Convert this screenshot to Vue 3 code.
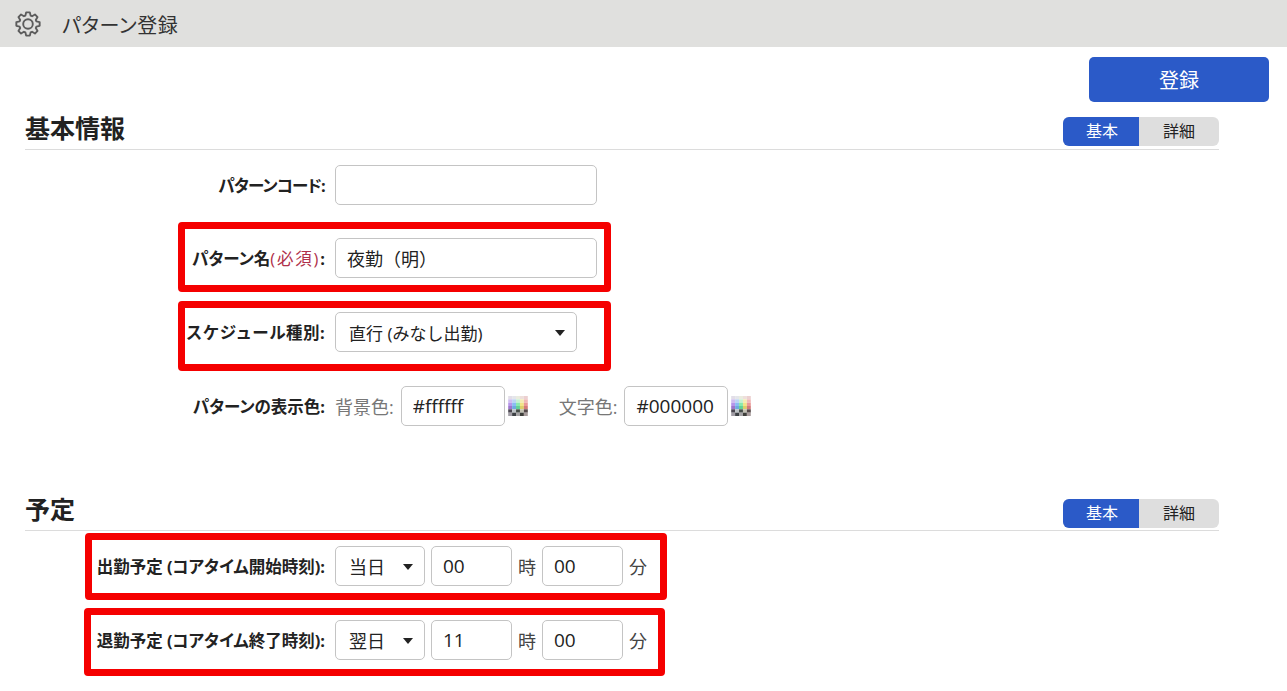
<script setup>
const gearPath = (() => {
  const teeth = 8, cx = 13, cy = 13, ro = 11.8, ri = 8.8
  const pts = []
  for (let i = 0; i < teeth; i++) {
    const a = (i / teeth) * Math.PI * 2 - Math.PI / 2
    const s = (Math.PI * 2) / teeth
    const list = [[ri, -0.5 * s + 0.09], [ro, -0.2 * s], [ro, 0.2 * s], [ri, 0.5 * s - 0.09]]
    list.forEach(([r, d]) => pts.push([cx + r * Math.cos(a + d), cy + r * Math.sin(a + d)]))
  }
  return 'M' + pts.map(p => p[0].toFixed(2) + ' ' + p[1].toFixed(2)).join('L') + 'Z'
})()

const paletteRows = [
  ['#e2dee8', '#e4e6ea', '#eaecdf', '#eedfdb', '#ecd0d0'],
  ['#cfbcf0', '#bcd3f4', '#c6f0d2', '#f4ecb4', '#f0b8b8'],
  ['#b696ea', '#8abcf2', '#88eaae', '#f2e488', '#ea9898'],
  ['#9e76cc', '#6eaae0', '#62d296', '#dccf6a', '#d47a7a'],
  ['#4a4650', '#bcc2c6', '#444c48', '#c2c0b2', '#544848'],
  ['#a09ca4', '#3c4044', '#a4a2a4', '#3e3e3a', '#a89c9c']
]
const cells = paletteRows.flatMap((row, y) => row.map((fill, x) => ({ x: x * 4, y: y * 3.4, fill })))

const annotations = [
  { left: 178, top: 222, width: 433, height: 70 },
  { left: 178, top: 301, width: 433, height: 70 },
  { left: 85, top: 533, width: 582, height: 67 },
  { left: 84, top: 608, width: 581, height: 68 }
]
</script>

<template>
  <div class="page">
    <header class="titlebar">
      <svg class="gear" width="26" height="26" viewBox="0 0 26 26" fill="none" stroke="#5c5c5c" stroke-width="1.9" stroke-linejoin="round">
        <path :d="gearPath" />
        <circle cx="13" cy="13" r="4.8" />
      </svg>
      <h1 class="title">パターン登録</h1>
    </header>

    <div class="toolbar">
      <button class="primary" type="button">登録</button>
    </div>

    <section class="section">
      <div class="section-head raised">
        <h2>基本情報</h2>
        <div class="segment"><span class="on">基本</span><span>詳細</span></div>
      </div>
      <div class="rows">
        <div class="row first">
          <label class="lab tight">パターンコード:</label>
          <input class="inp wide" value="" />
        </div>
        <div class="row">
          <label class="lab">パターン名<span class="req">(必須)</span>:</label>
          <input class="inp wide jp" value="夜勤（明）" />
        </div>
        <div class="row">
          <label class="lab full">スケジュール種別:</label>
          <div class="sel type">直行 (みなし出勤)</div>
        </div>
        <div class="row">
          <label class="lab">パターンの表示色:</label>
          <span class="sub">背景色:</span>
          <input class="inp color num" value="#ffffff" />
          <svg class="palette" width="20" height="20" viewBox="0 0 20 20.4"><rect v-for="c in cells" :key="c.x + '-' + c.y" :x="c.x" :y="c.y" width="4" height="3.4" :fill="c.fill" /></svg>
          <span class="sub second">文字色:</span>
          <input class="inp color num" value="#000000" />
          <svg class="palette" width="20" height="20" viewBox="0 0 20 20.4"><rect v-for="c in cells" :key="c.x + '-' + c.y" :x="c.x" :y="c.y" width="4" height="3.4" :fill="c.fill" /></svg>
        </div>
      </div>
    </section>

    <section class="section plan">
      <div class="section-head">
        <h2>予定</h2>
        <div class="segment"><span class="on">基本</span><span>詳細</span></div>
      </div>
      <div class="rows">
        <div class="row">
          <label class="lab">出勤予定 (コアタイム開始時刻):</label>
          <div class="sel day">当日</div>
          <input class="inp time num" value="00" />
          <span class="unit">時</span>
          <input class="inp time num" value="00" />
          <span class="unit">分</span>
        </div>
        <div class="row">
          <label class="lab">退勤予定 (コアタイム終了時刻):</label>
          <div class="sel day">翌日</div>
          <input class="inp time num" value="11" />
          <span class="unit">時</span>
          <input class="inp time num" value="00" />
          <span class="unit">分</span>
        </div>
      </div>
    </section>

    <div
      v-for="(a, i) in annotations"
      :key="i"
      class="mark"
      :style="{ left: a.left + 'px', top: a.top + 'px', width: a.width + 'px', height: a.height + 'px' }"
    ></div>
  </div>
</template>

<style>
html, body { margin: 0; background: #fff; overflow: hidden; }
</style>

<style scoped>
.page {
  position: relative;
  width: 1287px;
  height: 691px;
  overflow: hidden;
  font-family: "Open Sans", "Noto Sans CJK JP", sans-serif;
  font-size: 16px;
  color: #222;
  background: #fff;
}
.titlebar {
  display: flex;
  align-items: center;
  height: 47px;
  padding-left: 15px;
  box-sizing: border-box;
  background: #e0e0de;
}
.gear { flex: none; }
.title {
  margin: 2px 0 0 21px;
  font-size: 20px;
  font-weight: 400;
  color: #333;
  font-feature-settings: "palt";
  letter-spacing: 0.6px;
}
.toolbar {
  display: flex;
  justify-content: flex-end;
  height: 55px;
  padding: 10px 18px 0 0;
  box-sizing: border-box;
}
.primary {
  width: 180px;
  height: 45px;
  border: 0;
  border-radius: 5px;
  background: #2b5ac8;
  color: #fff;
  font: inherit;
  font-size: 20px;
}
.section {
  width: 1194px;
  margin-left: 25px;
}
.plan { margin-top: 57px; }
.section-head {
  display: flex;
  justify-content: space-between;
  align-items: flex-end;
  height: 48px;
  padding-bottom: 2px;
  box-sizing: border-box;
  border-bottom: 1px solid #dcdcdc;
}
.raised { padding-bottom: 3px; }
.section-head h2 {
  margin: 0 0 3px;
  font-size: 25px;
  line-height: 32px;
  font-weight: 700;
  color: #222;
}
.raised h2 { margin-bottom: 2px; }
.segment {
  display: flex;
  width: 156px;
  height: 29px;
  border-radius: 6px;
  overflow: hidden;
  background: #dedede;
  font-size: 16px;
  line-height: 29px;
  text-align: center;
}
.segment span { flex: 1; }
.segment .on {
  flex: none;
  width: 76px;
  padding-left: 2px;
  box-sizing: border-box;
  background: #2b5ac8;
  color: #fff;
}
.rows {
  display: flex;
  flex-direction: column;
  gap: 34px;
  padding-top: 15px;
}
.row {
  display: flex;
  align-items: center;
  height: 40px;
}
.first { margin-bottom: -1px; }
.lab {
  flex: none;
  width: 300px;
  margin-right: 10px;
  margin-top: -1px;
  text-align: right;
  font-weight: 700;
  font-size: 16.5px;
  font-feature-settings: "palt";
  color: #222;
}
.tight { letter-spacing: -0.8px; }
.full {
  font-feature-settings: normal;
  letter-spacing: 0.4px;
}
.req {
  font-weight: 400;
  color: #b0304a;
  letter-spacing: 1.8px;
}
.inp, .sel {
  box-sizing: border-box;
  height: 40px;
  border: 1px solid #c4c4c4;
  border-radius: 5px;
  background: #fff;
  font: inherit;
  font-size: 17px;
  color: #222;
  padding: 0 11px;
  outline: none;
}
.jp { font-size: 18px; }
.num { font-size: 19px; }
.sel {
  position: relative;
  display: flex;
  align-items: center;
  padding-left: 13px;
}
.sel::after {
  content: "";
  position: absolute;
  right: 11px;
  top: 17px;
  border-left: 5.5px solid transparent;
  border-right: 5.5px solid transparent;
  border-top: 6px solid #222;
}
.wide { width: 262px; }
.type { width: 242px; }
.day { width: 90px; margin-right: 6px; font-size: 18px; }
.time { width: 81px; }
.color { width: 104px; }
.sub {
  color: #777;
  font-size: 18px;
  margin-right: 7px;
}
.second { margin-left: 31px; }
.palette { margin-left: 3px; flex: none; }
.unit {
  width: 30px;
  text-align: center;
  color: #444;
  font-size: 18px;
}
.mark {
  position: absolute;
  box-sizing: border-box;
  border: 7px solid #f50000;
  border-radius: 4px;
  pointer-events: none;
}
</style>
